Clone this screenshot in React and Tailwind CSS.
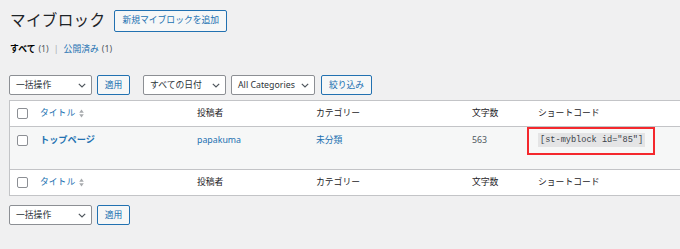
import React from "react";

const font = { fontFamily: '"Noto Sans", "Noto Sans CJK JP", sans-serif' };

function Chevron() {
  return (
    <svg width="8" height="5" viewBox="0 0 8 5" className="shrink-0">
      <polyline points="0.8,0.8 4,4 7.2,0.8" fill="none" stroke="#50575e" strokeWidth="1.2" />
    </svg>
  );
}

function Select({ label, w }) {
  return (
    <div className={`flex h-[20px] items-center justify-between rounded-[2px] border border-[#8c8f94] bg-white pl-[6px] pr-[5px] text-[8.8px] text-[#2c3338] ${w}`}>
      <span className="whitespace-nowrap leading-none">{label}</span>
      <Chevron />
    </div>
  );
}

function Btn({ label, w }) {
  return (
    <div className={`flex h-[20px] items-center justify-center rounded-[2px] border border-[#2271b1] bg-[#f6f7f7] text-[8.8px] text-[#2271b1] ${w}`}>
      <span className="whitespace-nowrap leading-none">{label}</span>
    </div>
  );
}

function Check() {
  return <div className="h-[11px] w-[11px] rounded-[2px] border border-[#8c8f94] bg-white" />;
}

function Sort() {
  return (
    <svg width="5" height="9" viewBox="0 0 5 9" className="ml-[4px]">
      <polygon points="2.5,0.5 4.8,3.8 0.2,3.8" fill="#a7aaad" />
      <polygon points="2.5,8.5 4.8,5.2 0.2,5.2" fill="#a7aaad" />
    </svg>
  );
}

const cols = "grid grid-cols-[30px_157px_119px_156px_66px_1fr]";

function HeadRow({ border }) {
  return (
    <div className={`${cols} h-[26px] items-center bg-white text-[8.8px] text-[#1d2327] ${border}`}>
      <div className="pl-[7px]"><Check /></div>
      <div className="flex items-center text-[#2271b1]">タイトル<Sort /></div>
      <div>投稿者</div>
      <div>カテゴリー</div>
      <div>文字数</div>
      <div>ショートコード</div>
    </div>
  );
}

export default function App() {
  return (
    <div className="h-[249px] w-[680px] overflow-hidden bg-[#f0f0f1] text-[#1d2327]" style={font}>
      <div className="flex h-[22px] items-center pl-[10px] mt-[10px]">
        <h1 className="text-[15.6px] leading-none font-normal text-[#1d2327] tracking-[0.3px]">マイブロック</h1>
        <div className="ml-[9px] flex h-[22px] items-center rounded-[2px] border border-[#2271b1] bg-[#f6f7f7] px-[7px] text-[8.8px] text-[#2271b1]">
          新規マイブロックを追加
        </div>
      </div>

      <div className="mt-[11px] flex h-[13px] items-center pl-[10px] text-[8.8px]">
        <span className="font-bold text-[#000]">すべて</span>
        <span className="ml-[3px] text-[#50575e]">(1)</span>
        <span className="mx-[5px] text-[#a7aaad]">|</span>
        <span className="text-[#2271b1]">公開済み</span>
        <span className="ml-[3px] text-[#50575e]">(1)</span>
      </div>

      <div className="mt-[19px] flex h-[20px] items-center pl-[9px]">
        <Select label="一括操作" w="w-[83px]" />
        <div className="ml-[5px]"><Btn label="適用" w="w-[33px]" /></div>
        <div className="ml-[13px]"><Select label="すべての日付" w="w-[83px]" /></div>
        <div className="ml-[5px]"><Select label="All Categories" w="w-[84px]" /></div>
        <div className="ml-[6px]"><Btn label="絞り込み" w="w-[51px]" /></div>
      </div>

      <div className="ml-[9px] mt-[5px] w-[700px] border border-[#c3c4c7]">
        <HeadRow border="border-b border-[#c3c4c7]" />
        <div className={`${cols} h-[42px] items-start bg-[#f6f7f7] pt-[6px] text-[8.8px]`}>
          <div className="pl-[7px] pt-[2px]"><Check /></div>
          <div className="font-bold text-[#2271b1] text-[9.2px] leading-[14px]">トップページ</div>
          <div className="text-[#2271b1] leading-[14px]">papakuma</div>
          <div className="text-[#2271b1] leading-[14px]">未分類</div>
          <div className="text-[#50575e] leading-[14px]">563</div>
          <div className="relative">
            <span
              className="inline-block bg-[#e4e4e5] px-[2px] text-[8.6px] leading-[14px] text-[#3c434a]"
              style={{ fontFamily: '"Liberation Mono", "DejaVu Sans Mono", monospace' }}
            >
              [st-myblock id="85"]
            </span>
            <div className="absolute left-[-11px] top-[-6px] h-[28px] w-[128px] border-2 border-[#f4282d]" />
          </div>
        </div>
        <HeadRow border="border-t border-[#c3c4c7]" />
      </div>

      <div className="mt-[9px] flex h-[20px] items-center pl-[9px]">
        <Select label="一括操作" w="w-[83px]" />
        <div className="ml-[5px]"><Btn label="適用" w="w-[33px]" /></div>
      </div>
    </div>
  );
}
